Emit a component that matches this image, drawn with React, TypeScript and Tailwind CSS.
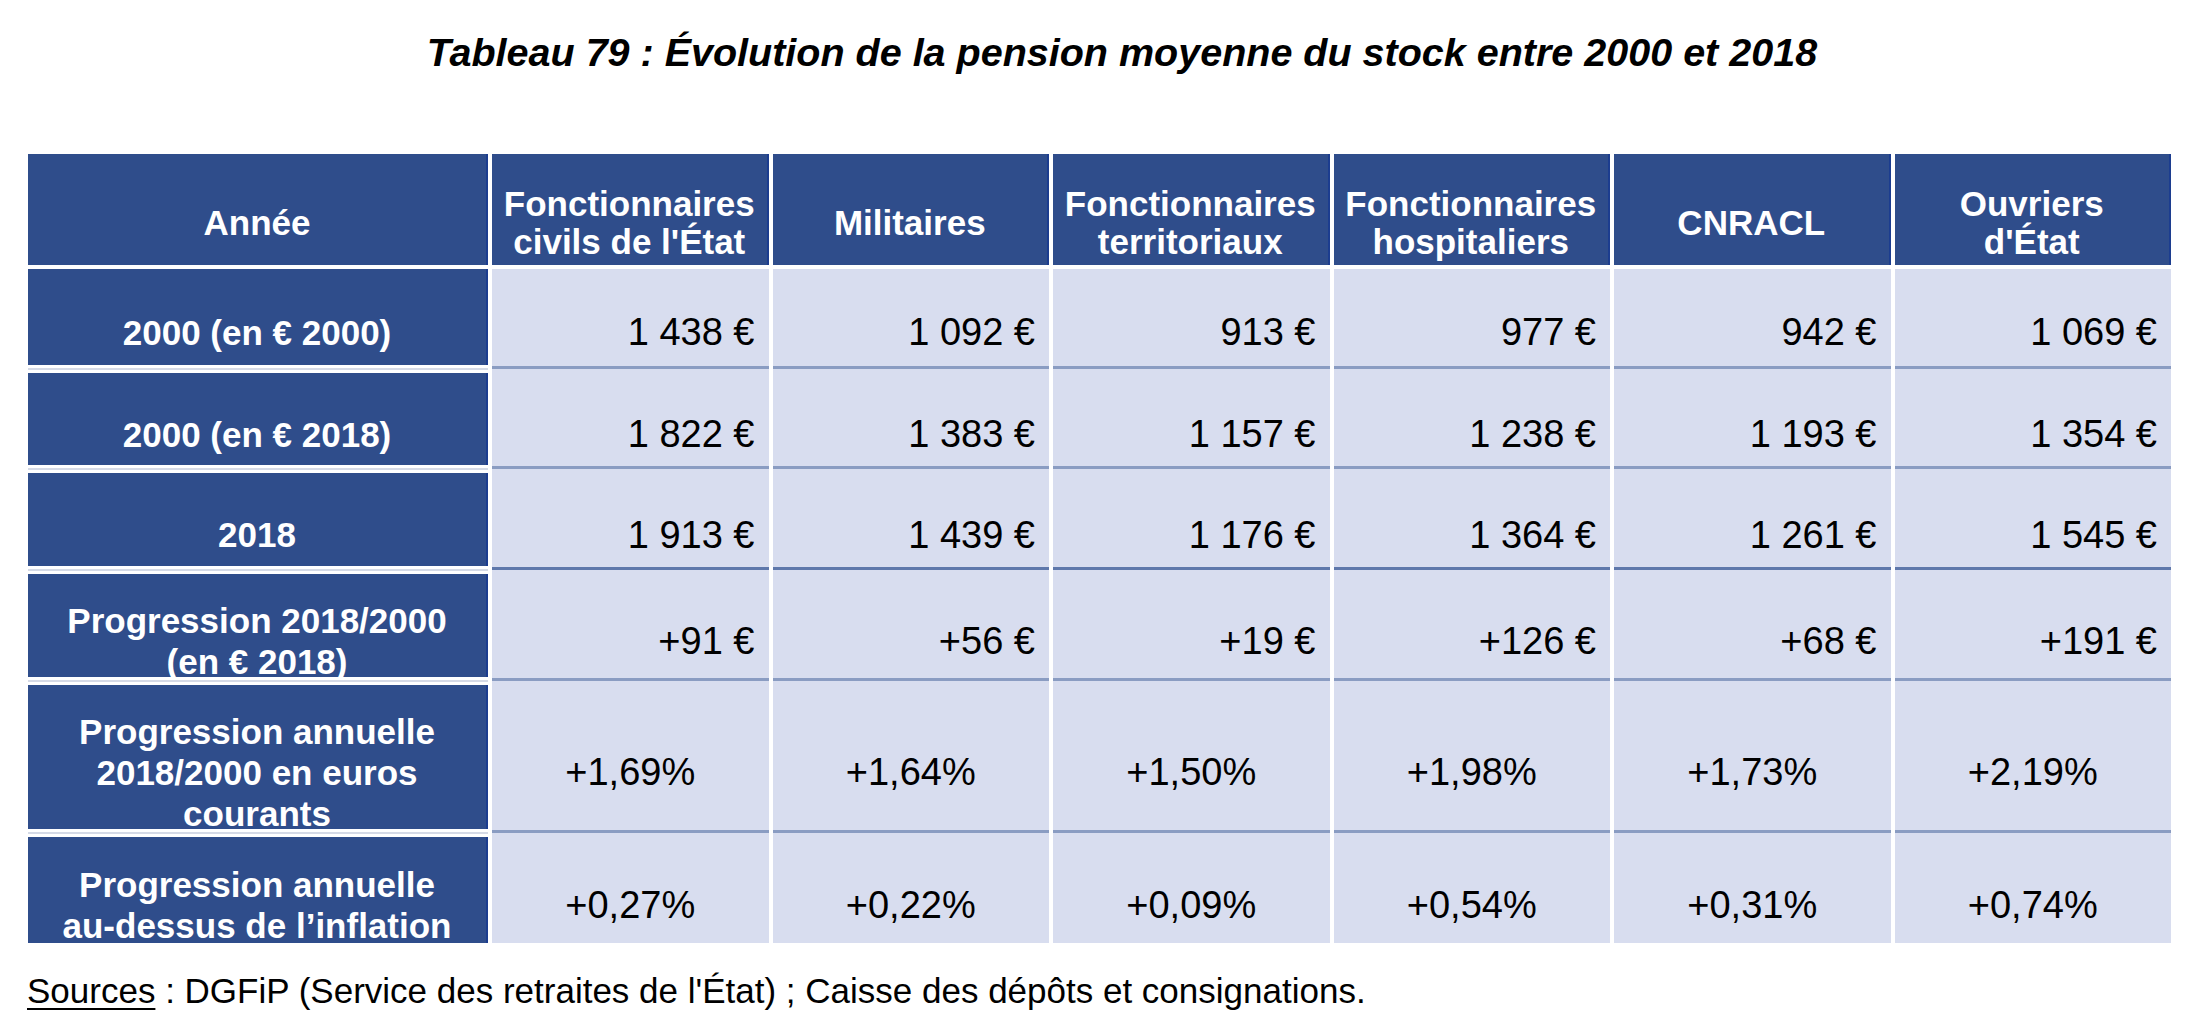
import React from "react";

const header = [
  ["Fonctionnaires", "civils de l'État"],
  ["Militaires"],
  ["Fonctionnaires", "territoriaux"],
  ["Fonctionnaires", "hospitaliers"],
  ["CNRACL"],
  ["Ouvriers", "d'État"],
];

// h = full row block height (label cell + separator)
const rows = [
  { label: ["2000 (en € 2000)"], h: 104, align: "right", line: "bg-[#8a9cc2]", values: ["1 438 €", "1 092 €", "913 €", "977 €", "942 €", "1 069 €"] },
  { label: ["2000 (en € 2018)"], h: 100, align: "right", line: "bg-[#8a9cc2]", values: ["1 822 €", "1 383 €", "1 157 €", "1 238 €", "1 193 €", "1 354 €"] },
  { label: ["2018"], h: 101, align: "right", line: "bg-[#5f78ab]", values: ["1 913 €", "1 439 €", "1 176 €", "1 364 €", "1 261 €", "1 545 €"] },
  { label: ["Progression 2018/2000", "(en € 2018)"], h: 111, align: "right", line: "bg-[#8a9cc2]", values: ["+91 €", "+56 €", "+19 €", "+126 €", "+68 €", "+191 €"] },
  {
    label: ["Progression annuelle", "2018/2000 en euros", "courants"],
    h: 152,
    align: "center",
    line: "bg-[#8a9cc2]",
    values: ["+1,69%", "+1,64%", "+1,50%", "+1,98%", "+1,73%", "+2,19%"],
  },
  {
    label: ["Progression annuelle", "au-dessus de l’inflation"],
    h: 106,
    align: "center",
    line: "",
    values: ["+0,27%", "+0,22%", "+0,09%", "+0,54%", "+0,31%", "+0,74%"],
    last: true,
  },
];

export default function App() {
  return (
    <div className="w-[2200px] h-[1034px] bg-white font-['Liberation_Sans',Arial,sans-serif] text-black">
      {/* title */}
      <div className="pt-[29px] pl-[44px] text-center text-[39.5px] leading-[46px] font-bold italic">
        Tableau 79 : Évolution de la pension moyenne du stock entre 2000 et 2018
      </div>

      <div className="mt-[79px] ml-[28px] w-[2143px]">
        {/* header */}
        <div className="grid grid-cols-[460px_repeat(6,1fr)] gap-x-[4px] h-[115px]">
          <div className="h-[111px] bg-[#2f4d8b] border-r-2 border-[#1c3d8f] flex items-center justify-center pt-[27px] text-white font-bold text-[35px] leading-[38px]">
            Année
          </div>
          {header.map((lines, i) => (
            <div
              key={i}
              className="h-[111px] bg-[#2f4d8b] border-r-2 border-[#1c3d8f] flex flex-col items-center justify-center pt-[27px] text-white font-bold text-[35px] leading-[38px] text-center"
            >
              {lines.map((l) => (
                <div key={l}>{l}</div>
              ))}
            </div>
          ))}
        </div>

        {/* body */}
        {rows.map((row, r) => (
          <div
            key={r}
            className="grid grid-cols-[460px_repeat(6,1fr)] gap-x-[4px]"
            style={{ height: row.h }}
          >
            <div className="flex flex-col">
              <div
                className="bg-[#2f4d8b] border-r-2 border-[#1c3d8f] flex flex-col items-center justify-center pt-[30px] text-white font-bold text-[35px] leading-[41px] text-center"
                style={{ height: row.last ? row.h : row.h - 8 }}
              >
                {row.label.map((l) => (
                  <div key={l} className="whitespace-nowrap">
                    {l}
                  </div>
                ))}
              </div>
              {!row.last && <div className="mt-[3px] h-[2px] bg-[#d5dae6]" />}
            </div>
            {row.values.map((v, i) => (
              <div key={i} className="bg-[#d8ddef] flex flex-col">
                <div
                  className={
                    "flex items-center pt-[30px] text-[38px] leading-[44px] whitespace-nowrap " +
                    (row.align === "right" ? "justify-end pr-[14px]" : "justify-center")
                  }
                  style={{ height: row.last ? row.h : row.h - 8 }}
                >
                  {v}
                </div>
                {!row.last && <div className={"mt-[1px] h-[3px] " + row.line} />}
              </div>
            ))}
          </div>
        ))}
      </div>

      {/* sources */}
      <div className="mt-[28px] ml-[27px] text-[35px] leading-[40px] whitespace-nowrap">
        <span className="underline decoration-[2px] underline-offset-[5px]">Sources</span> : DGFiP (Service des
        retraites de l'État) ; Caisse des dépôts et consignations.
      </div>
    </div>
  );
}
